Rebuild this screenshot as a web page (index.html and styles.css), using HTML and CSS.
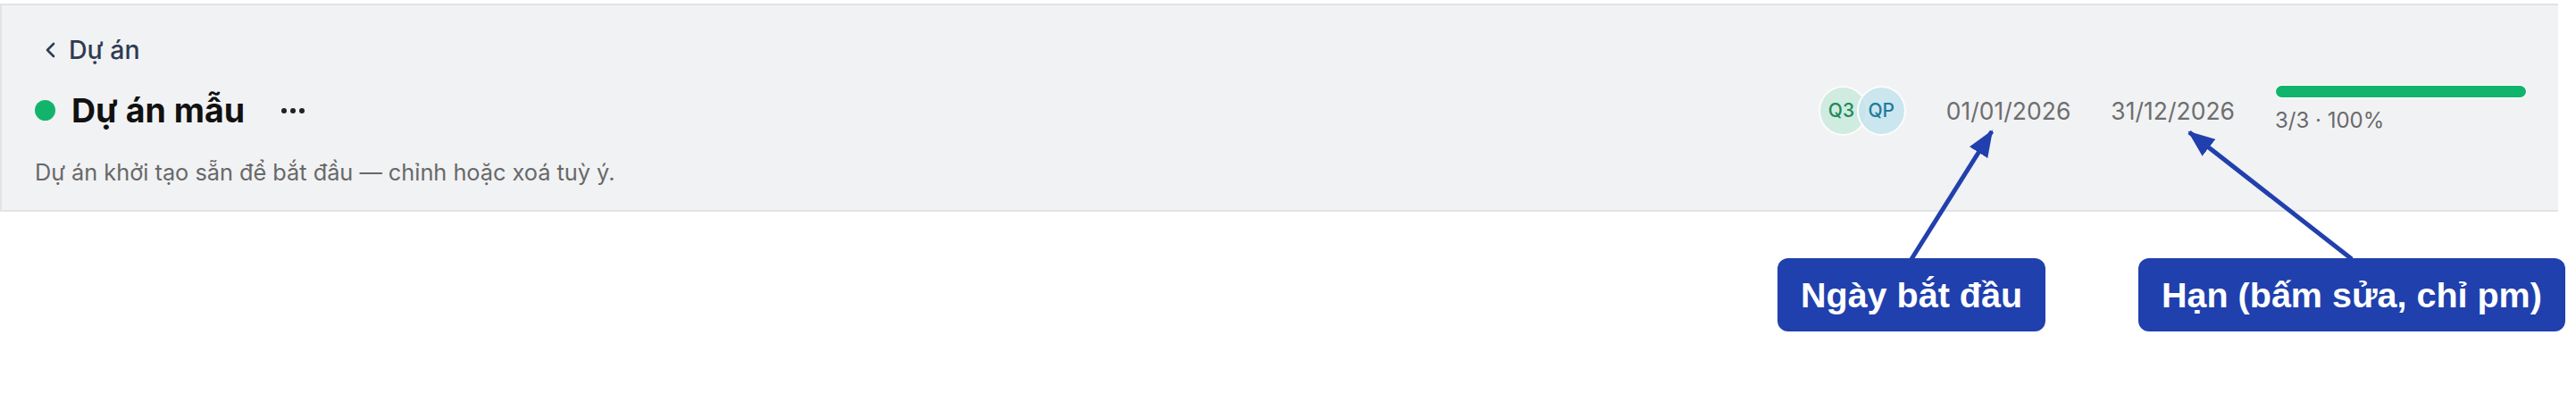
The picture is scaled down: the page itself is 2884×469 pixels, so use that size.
FILE: index.html
```html
<!DOCTYPE html>
<html lang="vi">
<head>
    <meta charset="UTF-8">
    <meta name="viewport" content="width=device-width, initial-scale=1.0">
    <title>Dự án mẫu</title>
    <link rel="stylesheet" href="styles.css">
</head>
<body>
    <div class="page">
        <header class="project-head">
            <a class="back-link" href="#">
                <svg class="chevron" width="16" height="20" viewBox="0 0 16 20">
                    <polyline points="12,3 5,10 12,17" fill="none" stroke="currentColor" stroke-width="2.6" stroke-linecap="round" stroke-linejoin="round"/>
                </svg>
                <span>Dự án</span>
            </a>
            <div class="title-row">
                <div class="title-left">
                    <span class="status-dot"></span>
                    <h1>Dự án mẫu</h1>
                    <button class="more-btn" aria-label="Thêm">
                        <i></i><i></i><i></i>
                    </button>
                </div>
                <div class="meta">
                    <div class="avatars">
                        <span class="avatar avatar-green">Q3</span>
                        <span class="avatar avatar-teal">QP</span>
                    </div>
                    <span class="date">01/01/2026</span>
                    <span class="date">31/12/2026</span>
                    <div class="progress">
                        <div class="progress-track"><div class="progress-fill" style="width: 100%"></div></div>
                        <span class="progress-text">3/3 · 100%</span>
                    </div>
                </div>
            </div>
            <p class="desc">Dự án khởi tạo sẵn để bắt đầu — chỉnh hoặc xoá tuỳ ý.</p>
        </header>

        <!-- annotation overlay -->
        <svg class="arrows" width="2884" height="469" viewBox="0 0 2884 469">
            <defs>
                <marker id="head" markerUnits="userSpaceOnUse" markerWidth="30" markerHeight="24" refX="28" refY="12" orient="auto">
                    <path d="M0,0 L30,12 L0,24 Z" fill="#2140ad"/>
                </marker>
            </defs>
            <line x1="2140" y1="290" x2="2230" y2="147" stroke="#2140ad" stroke-width="5" marker-end="url(#head)"/>
            <line x1="2633" y1="290" x2="2451" y2="148" stroke="#2140ad" stroke-width="5" marker-end="url(#head)"/>
        </svg>
        <div class="callout callout-start">Ngày bắt đầu</div>
        <div class="callout callout-due">Hạn (bấm sửa, chỉ pm)</div>
    </div>
</body>
</html>
```

FILE: styles.css
```css
body {
    margin: 0;
    background: #fff;
    font-family: Inter, "Noto Sans", sans-serif;
}
.page {
    position: relative;
    height: 469px;
    padding-top: 4px;
    box-sizing: border-box;
}
.project-head {
    margin-right: 20px;
    padding: 34px 35px 27px 37px;
    background: #f1f2f4;
    border-top: 2px solid #e2e3e5;
    border-bottom: 2px solid #e2e3e5;
    border-left: 2px solid #e2e3e5;
}
.back-link {
    display: flex;
    align-items: center;
    gap: 13px;
    height: 32px;
    padding-left: 9px;
    font-size: 28.5px;
    font-weight: 500;
    line-height: 32px;
    color: #2f3b52;
    text-decoration: none;
}
.chevron {
    color: #2f3b52;
}
.title-row {
    display: flex;
    align-items: center;
    justify-content: space-between;
    margin-top: 24px;
    height: 55px;
}
.title-left {
    display: flex;
    align-items: center;
}
.status-dot {
    width: 23px;
    height: 23px;
    border-radius: 50%;
    background: #12b46c;
    margin-right: 18px;
}
.title-left h1 {
    margin: 0;
    font-size: 37.5px;
    font-weight: 700;
    line-height: 44px;
    color: #111;
}
.more-btn {
    display: flex;
    gap: 4px;
    margin-left: 41px;
    padding: 0;
    border: none;
    background: none;
    cursor: pointer;
}
.more-btn i {
    width: 6px;
    height: 6px;
    border-radius: 50%;
    background: #222;
}
.meta {
    display: flex;
    align-items: center;
    gap: 45px;
}
.avatars {
    display: flex;
}
.avatar {
    display: flex;
    align-items: center;
    justify-content: center;
    width: 55px;
    height: 56px;
    box-sizing: border-box;
    border: 2px solid #fbfcfc;
    border-radius: 50%;
    font-size: 21px;
    font-weight: 500;
    overflow: hidden;
}
.avatar-green {
    background: #d0ebdf;
    color: #1e8a5b;
    justify-content: flex-start;
    padding-left: 9px;
}
.avatar-teal {
    margin-left: -12px;
    background: rgba(196, 228, 236, 0.85);
    color: #1f7c9e;
}
.date {
    font-size: 26.5px;
    color: #6e6e6e;
    line-height: 30px;
}
.progress {
    display: flex;
    flex-direction: column;
    width: 282px;
    margin-top: -4px;
}
.progress-track {
    height: 15px;
    border-radius: 8px;
    background: #fff;
    padding: 1px;
    box-sizing: border-box;
}
.progress-fill {
    height: 100%;
    border-radius: 7px;
    background: #11b46c;
}
.progress-text {
    margin-top: 11px;
    font-size: 24px;
    line-height: 28px;
    color: #6a6a6a;
}
.desc {
    margin: 27px 0 0;
    font-size: 25.3px;
    line-height: 30px;
    color: #686868;
}
.arrows {
    position: absolute;
    top: 0;
    left: 0;
    pointer-events: none;
}
.callout {
    position: absolute;
    top: 289px;
    height: 82px;
    padding: 0 26px;
    border-radius: 12px;
    background: #2040ae;
    color: #fff;
    font-family: "Liberation Sans", Arial, sans-serif;
    font-weight: 700;
    font-size: 39.5px;
    line-height: 82px;
    white-space: nowrap;
}
.callout-start {
    left: 1990px;
}
.callout-due {
    left: 2394px;
}
```
